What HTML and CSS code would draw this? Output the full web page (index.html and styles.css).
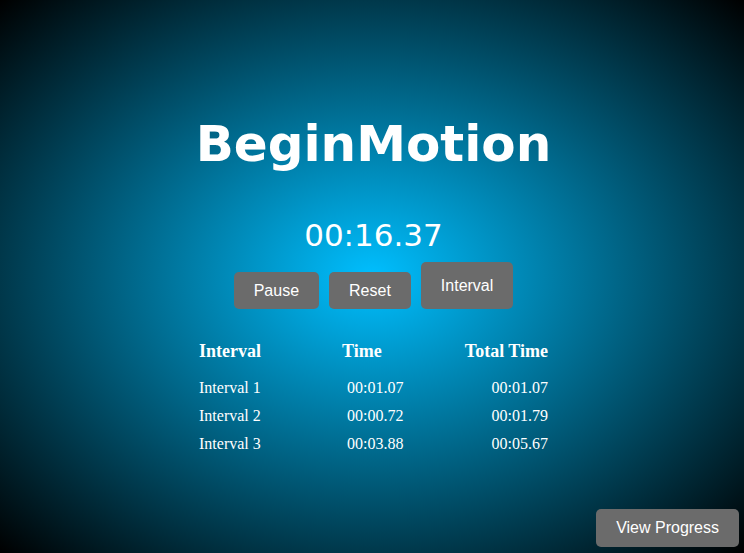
FILE: index.html
```html
<!DOCTYPE html>
<html lang="en">
<head>
<meta charset="utf-8">
<title>BeginMotion</title>
<link rel="stylesheet" href="styles.css">
</head>
<body>
<main class="app">
  <h1 class="title">BeginMotion</h1>
  <div class="timer">00:16.37</div>
  <div class="controls">
    <button class="btn">Pause</button>
    <button class="btn">Reset</button>
    <button class="btn btn-tall">Interval</button>
  </div>
  <div class="laps">
    <div class="row head">
      <div>Interval</div>
      <div class="c2">Time</div>
      <div class="c3">Total Time</div>
    </div>
    <div class="row">
      <div>Interval 1</div>
      <div class="c2 d">00:01.07</div>
      <div class="c3">00:01.07</div>
    </div>
    <div class="row">
      <div>Interval 2</div>
      <div class="c2 d">00:00.72</div>
      <div class="c3">00:01.79</div>
    </div>
    <div class="row">
      <div>Interval 3</div>
      <div class="c2 d">00:03.88</div>
      <div class="c3">00:05.67</div>
    </div>
  </div>
</main>
<button class="btn progress">View Progress</button>
</body>
</html>
```
FILE: styles.css
```css
html, body {
  margin: 0;
  height: 100%;
}
body {
  background: radial-gradient(ellipse farthest-corner at center, #00bfff 0%, #000 100%);
  color: #fff;
  overflow: hidden;
}
.app {
  display: flex;
  flex-direction: column;
  align-items: center;
  padding-top: 114px;
  padding-left: 3px;
}
.title {
  margin: 0;
  font-family: "DejaVu Sans", Verdana, sans-serif;
  font-weight: bold;
  font-size: 50px;
  line-height: 60px;
}
.timer {
  margin-top: 43px;
  font-family: "DejaVu Sans", Verdana, sans-serif;
  font-size: 31px;
  line-height: 36px;
}
.controls {
  margin-top: 9px;
  display: flex;
  align-items: flex-end;
  gap: 10px;
}
.btn {
  font-family: "Liberation Sans", Arial, sans-serif;
  font-size: 16px;
  line-height: 17px;
  color: #fff;
  background: #6b6b6b;
  border: none;
  border-radius: 5px;
  padding: 10px 20px;
  margin: 0;
}
.btn-tall {
  padding: 15px 20px;
}
.laps {
  margin-top: 30px;
  width: 349px;
  font-family: "Liberation Serif", "Times New Roman", serif;
  font-size: 16px;
}
.row {
  display: grid;
  grid-template-columns: 143px 1fr auto;
  line-height: 28px;
}
.row.head {
  font-weight: bold;
  font-size: 18px;
  line-height: 24px;
  margin-bottom: 11px;
}
.c3 {
  text-align: right;
}
.d {
  padding-left: 5px;
}
.progress {
  position: fixed;
  right: 5px;
  bottom: 6px;
  line-height: 18px;
}
```
